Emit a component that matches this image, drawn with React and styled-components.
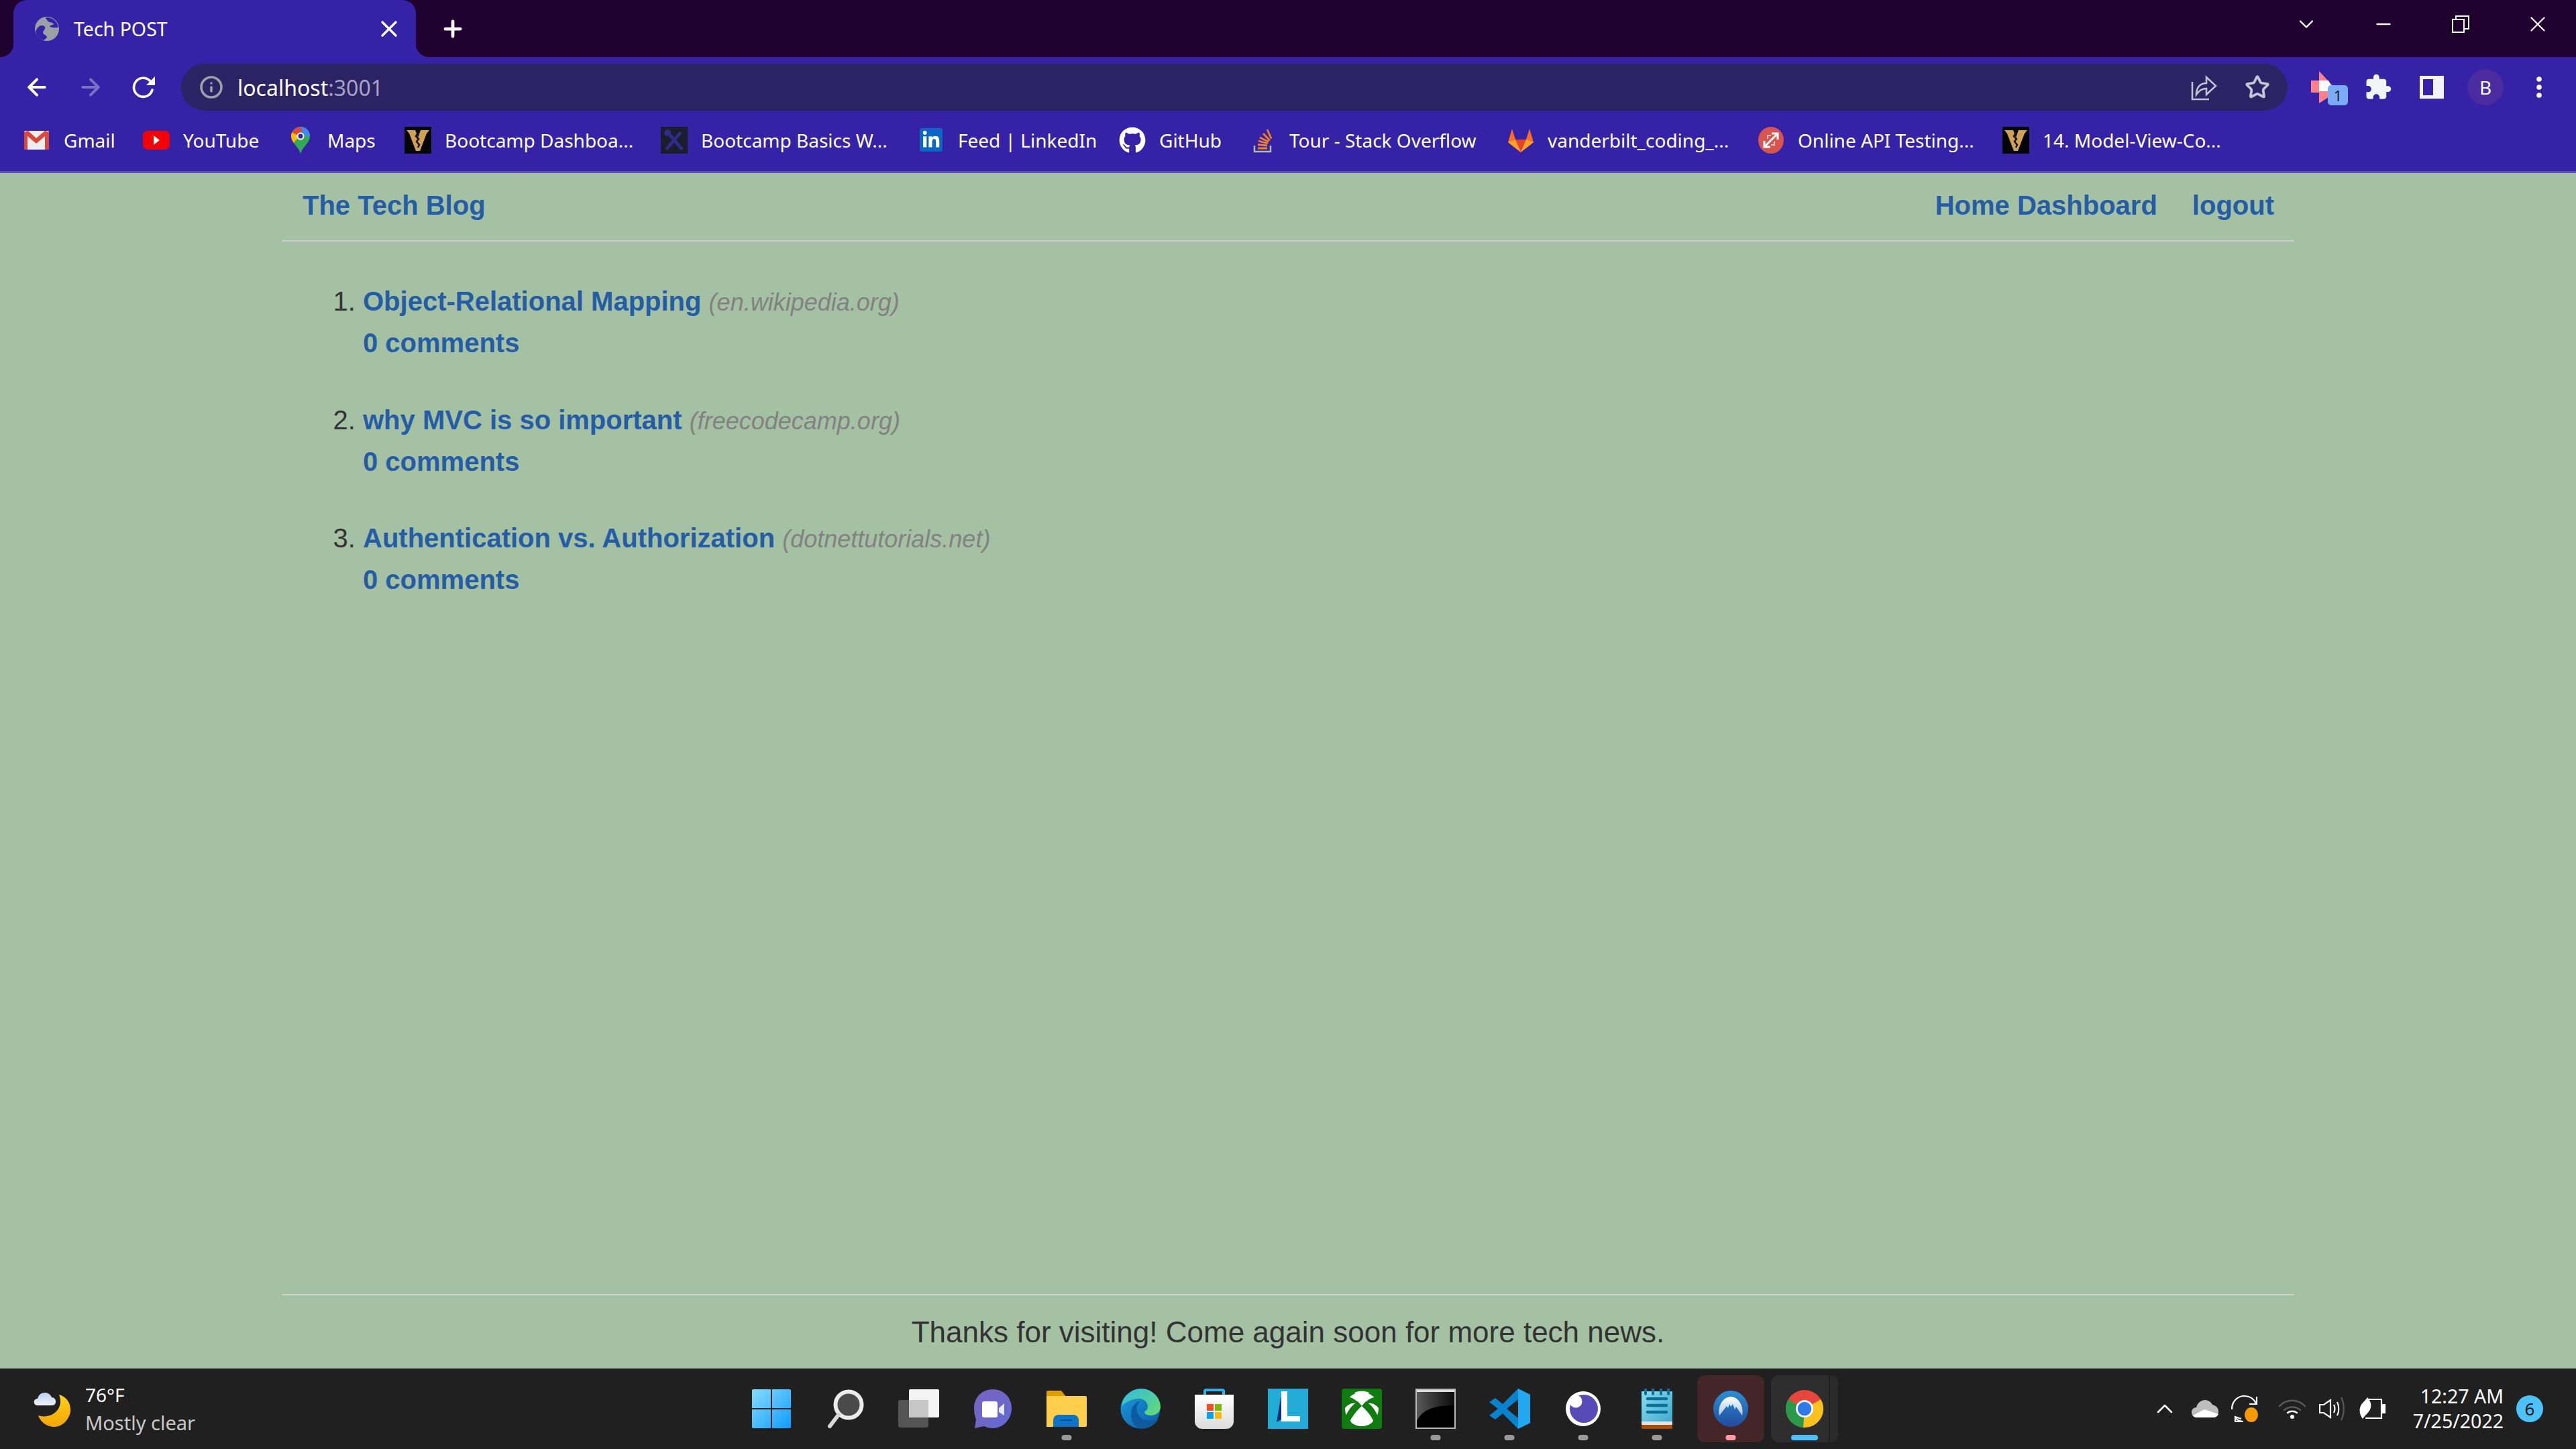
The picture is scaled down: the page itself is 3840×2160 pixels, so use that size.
import styled, { createGlobalStyle } from "styled-components";
import { ArrowLeft, ArrowRight, Info, Star, X, Plus, ChevronDown, ChevronUp, Minus } from "lucide-react";
import { MdExtension } from "react-icons/md";
import { FaGithub, FaLinkedinIn } from "react-icons/fa";

const UI_FONT = `"Noto Sans", "Open Sans", sans-serif`;
const PAGE_FONT = `"Liberation Sans", Arial, sans-serif`;

const GlobalStyle = createGlobalStyle`
  html, body {
    margin: 0;
    padding: 0;
    background: #a5c1a3;
  }
  * {
    box-sizing: border-box;
  }
`;

const Screen = styled.div`
  width: 3840px;
  height: 2160px;
  display: flex;
  flex-direction: column;
  overflow: hidden;
  font-family: ${UI_FONT};
`;

// ---------------- BROWSER TABS ----------------
const TabStrip = styled.div`
  height: 85px;
  flex: none;
  display: flex;
  padding-left: 20px;
  background: #1f002f;
`;

const Tab = styled.div`
  position: relative;
  width: 600px;
  height: 85px;
  display: flex;
  align-items: center;
  padding: 0 20px 0 32px;
  background: #3522a6;
  border-radius: 20px 20px 0 0;
  color: #fff;

  &::before,
  &::after {
    content: "";
    position: absolute;
    bottom: 0;
    width: 20px;
    height: 20px;
  }
  &::before {
    left: -20px;
    background: radial-gradient(circle at 0 0, transparent 20px, #3522a6 20.5px);
  }
  &::after {
    right: -20px;
    background: radial-gradient(circle at 100% 0, transparent 20px, #3522a6 20.5px);
  }
`;

const TabTitle = styled.span`
  flex: 1;
  margin-left: 22px;
  font-size: 28.5px;
  white-space: nowrap;
`;

const NewTab = styled.div`
  width: 70px;
  margin-left: 20px;
  display: flex;
  align-items: center;
  justify-content: center;
  color: #fff;
`;

const WindowControls = styled.div`
  margin-left: auto;
  display: flex;
`;

const WindowButton = styled.div`
  width: 115px;
  height: 72px;
  display: flex;
  align-items: center;
  justify-content: center;
  color: #fff;
`;

// ---------------- TOOLBAR ----------------
const Toolbar = styled.div`
  height: 80px;
  flex: none;
  display: flex;
  align-items: center;
  padding: 10px 15px 0;
  background: #3522a6;
`;

const ToolButton = styled.div`
  width: 80px;
  height: 70px;
  flex: none;
  display: flex;
  align-items: center;
  justify-content: center;
  color: ${(p) => p.$color || "#fff"};
`;

const AddressBar = styled.div`
  width: 3140px;
  height: 70px;
  flex: none;
  margin: 0 15px;
  padding: 0 5px 0 27px;
  display: flex;
  align-items: center;
  background: #2c2365;
  border-radius: 35px;
`;

const Url = styled.div`
  margin-left: 21px;
  font-size: 32px;
  color: #fff;
`;

const UrlPort = styled.span`
  color: #a8a3c4;
`;

const BarActions = styled.div`
  margin-left: auto;
  display: flex;
`;

const ProfileBadge = styled.div`
  width: 54px;
  height: 54px;
  display: flex;
  align-items: center;
  justify-content: center;
  border-radius: 50%;
  background: #4a2ba0;
  color: #fff;
  font-size: 28px;
`;

const ExtensionWrap = styled.div`
  position: relative;
  width: 40px;
  height: 48px;
`;

const ExtensionCount = styled.span`
  position: absolute;
  left: 25px;
  top: 21px;
  width: 30px;
  height: 30px;
  display: flex;
  align-items: center;
  justify-content: center;
  border-radius: 5px;
  background: #7baaf7;
  color: #202124;
  font-size: 22px;
`;

// ---------------- BOOKMARKS ----------------
const BookmarksBar = styled.div`
  height: 93px;
  flex: none;
  display: flex;
  align-items: center;
  padding: 0 0 3px 35px;
  background: #3522a6;
  border-bottom: 3px solid #6050b8;
`;

const Bookmark = styled.div`
  width: ${(p) => p.$w}px;
  flex: none;
  display: flex;
  align-items: center;
  gap: 20px;
  font-size: 28px;
  color: #fff;
  white-space: nowrap;
`;

const BookmarkIcon = styled.svg`
  width: 40px;
  height: 40px;
  flex: none;
`;

const LinkedinSlot = styled.div`
  width: 40px;
  height: 40px;
  flex: none;
  display: flex;
  align-items: center;
  justify-content: center;
`;

const LinkedinBox = styled.div`
  width: 34px;
  height: 35px;
  display: flex;
  align-items: center;
  justify-content: center;
  border-radius: 3px;
  background: #0a66c2;
`;

// ---------------- PAGE ----------------
const Main = styled.main`
  flex: 1;
  display: flex;
  flex-direction: column;
  width: 3000px;
  margin: 0 auto;
  font-family: ${PAGE_FONT};
  color: #333;
`;

const SiteHeader = styled.header`
  height: 102px;
  flex: none;
  display: flex;
  align-items: center;
  justify-content: space-between;
  padding: 0 30px 4px 31px;
  border-bottom: 2px solid #d0d0d0;
`;

const SiteLink = styled.a`
  font-size: 40px;
  font-weight: 700;
  line-height: 62px;
  color: #245ca6;
  text-decoration: none;
`;

const SiteNav = styled.nav`
  display: flex;
  gap: 52px;
`;

const PostList = styled.ol`
  flex: 1;
  margin: 58px 0 0;
  padding: 0 0 0 121px;
  list-style: decimal;
`;

const Post = styled.li`
  margin-bottom: 52.5px;
  font-size: 40px;
  line-height: 62px;
`;

const PostLine = styled.div`
  height: 62px;
  white-space: nowrap;
`;

const Domain = styled.span`
  font-size: 36px;
  font-style: italic;
  color: #828282;
`;

const SiteFooter = styled.footer`
  height: 111px;
  flex: none;
  padding-top: 29px;
  border-top: 2px solid #d0d0d0;
  text-align: center;
  font-size: 44px;
  line-height: 52px;
`;

// ---------------- TASKBAR ----------------
const Taskbar = styled.div`
  height: 120px;
  flex: none;
  display: flex;
  align-items: center;
  background: #202020;
  color: #fff;
`;

const Weather = styled.div`
  width: 1095px;
  flex: none;
  display: flex;
  align-items: center;
  gap: 21px;
  padding-left: 50px;
`;

const WeatherText = styled.div`
  font-size: 28px;
  line-height: 41px;
`;

const WeatherSub = styled.div`
  font-size: 29px;
  color: #c8c8c8;
`;

const Apps = styled.div`
  display: flex;
`;

const AppCell = styled.div`
  position: relative;
  width: 110px;
  height: 120px;
  flex: none;
  display: flex;
  align-items: center;
  justify-content: center;
`;

const AppTile = styled.div`
  position: relative;
  width: 100px;
  height: 100px;
  display: flex;
  align-items: center;
  justify-content: center;
  border-radius: 12px;
  background: ${(p) =>
    p.$state === "alert" ? "#452628" : p.$state === "active" ? "#2e2e2e" : "transparent"};

  &::after {
    content: "";
    display: ${(p) => (p.$state === "active" ? "block" : "none")};
    position: absolute;
    top: 0;
    right: 0;
    bottom: 0;
    width: 12px;
    border-left: 2px solid #202020;
    border-radius: 0 12px 12px 0;
    background: #2a2a2a;
  }
`;

const AppDot = styled.span`
  position: absolute;
  left: 50%;
  bottom: 13px;
  width: ${(p) => (p.$state === "active" ? 40 : 15)}px;
  height: 8px;
  transform: translateX(-50%);
  border-radius: 4px;
  background: ${(p) =>
    p.$state === "active" ? "#4cc2ff" : p.$state === "alert" ? "#ff99a4" : "#9a9a9a"};
`;

const Tray = styled.div`
  margin-left: auto;
  display: flex;
  align-items: center;
  padding-right: 49px;
`;

const TrayIcon = styled.div`
  width: 60px;
  height: 60px;
  margin-left: ${(p) => (p.$spaced ? 10 : 0)}px;
  display: flex;
  align-items: center;
  justify-content: center;
  color: #fff;
`;

const Clock = styled.div`
  width: 165px;
  text-align: right;
  font-size: 28.5px;
  line-height: 37px;
  white-space: nowrap;
`;

const NotificationBadge = styled.div`
  width: 40px;
  height: 40px;
  margin-left: 19px;
  display: flex;
  align-items: center;
  justify-content: center;
  border-radius: 50%;
  background: #4cc2ff;
  color: #111;
  font-size: 26px;
`;

// ---------------- ICONS ----------------
const Globe = () => (
  <svg width="36" height="36" viewBox="0 0 36 36">
    <circle cx="18" cy="18" r="18" fill="#9aa0a6" />
    <path d="M1 22c2-5 5-9 9-9 4 0 6 2 5 5-1 2-3 3-3 6 1 3 5 3 6 6-1 2-3 4-5 5C7 34 2 29 1 22z" fill="#3522a6" />
    <path d="M16 1c1 3 3 6 6 7 3 1 6 1 6 3-1 2-5 1-6 3 2 3 8 2 13 2C34 7 26 0 16 1z" fill="#3522a6" />
  </svg>
);

const Reload = () => (
  <svg width="36" height="36" viewBox="0 0 36 36">
    <path d="M30 22a14 14 0 1 1-3-13" fill="none" stroke="#fff" strokeWidth="3.6" strokeLinecap="round" />
    <path d="M34 2v13H21z" fill="#fff" />
  </svg>
);

const Share = () => (
  <svg width="40" height="40" viewBox="0 0 40 40" fill="none" stroke="#c4c4d2" strokeWidth="2.6">
    <path d="M3 12v26h25" />
    <path d="M9 31c0-11 6-17 15-17V5l14 13-14 13v-9c-7 0-11 3-15 9z" />
  </svg>
);

const ExtensionArrow = () => (
  <svg width="40" height="48" viewBox="0 0 40 48">
    <path d="M12 0l28 30-28 18V32H0V14h12z" fill="#ff8088" />
    <path d="M12 14h14l8 16H12z" fill="#fff" />
  </svg>
);

const SidePanel = () => (
  <svg width="36" height="36" viewBox="0 0 36 36">
    <path fillRule="evenodd" d="M0 1h36v34H0zM5 6v24h15V6z" fill="#f4f4f8" />
  </svg>
);

const Kebab = () => (
  <svg width="10" height="32" viewBox="0 0 10 32" fill="#fff">
    <circle cx="5" cy="4" r="3.8" />
    <circle cx="5" cy="16" r="3.8" />
    <circle cx="5" cy="28" r="3.8" />
  </svg>
);

const RestoreIcon = () => (
  <svg width="26" height="26" viewBox="0 0 26 26" fill="none" stroke="#fff" strokeWidth="2">
    <rect x="1" y="6" width="17" height="19" />
    <path d="M6 6V1h19v19h-7" />
  </svg>
);

const VIcon = () => (
  <BookmarkIcon viewBox="0 0 40 40">
    <rect width="40" height="40" fill="#050505" />
    <path d="M3 5h13l4 11 4-11h13l-4 5-10 26h-6L7 10z" fill="#d0a154" />
    <path d="M20 9l-3 5 4 4-3 4 4 5-2 4" fill="none" stroke="#111" strokeWidth="2.5" />
  </BookmarkIcon>
);

const bookmarkIcons = {
  gmail: (
    <BookmarkIcon viewBox="0 0 40 40">
      <rect x="1" y="6" width="37" height="28" rx="2" fill="#eeeeee" />
      <path d="M1 8v26h5V14l13 11 13-11v20h6V8l-6-2-13 11L7 6z" fill="#d9483b" />
    </BookmarkIcon>
  ),
  youtube: (
    <BookmarkIcon viewBox="0 0 40 40">
      <rect y="6" width="40" height="28" rx="7" fill="#f60002" />
      <path d="M16 13l9 7-9 7z" fill="#fff" />
    </BookmarkIcon>
  ),
  maps: (
    <BookmarkIcon viewBox="0 0 40 40">
      <path d="M20 0c8 0 14 6 14 14 0 10-10 14-14 26C16 28 6 24 6 14 6 6 12 0 20 0z" fill="#34a853" />
      <path d="M8 8C6 10 6 12 6 14c0 4 2 7 4 10l8-10z" fill="#fbbc04" />
      <path d="M8 8c3-5 7-8 12-8l2 6-6 6-6-2z" fill="#ea4335" />
      <path d="M20 0c8 0 14 6 14 14l-8-1-4-7z" fill="#4285f4" />
      <circle cx="20" cy="14" r="5.5" fill="#fff" />
      <circle cx="20" cy="14" r="3.5" fill="#3522a6" />
    </BookmarkIcon>
  ),
  v: <VIcon />,
  tools: (
    <BookmarkIcon viewBox="0 0 40 40">
      <rect width="40" height="40" fill="#1a1d2b" />
      <path d="M10 8l22 26M30 8L8 34" stroke="#2f2a8c" strokeWidth="5" />
      <circle cx="10" cy="9" r="5" fill="#2f2a8c" />
    </BookmarkIcon>
  ),
  linkedin: (
    <LinkedinSlot>
      <LinkedinBox>
        <FaLinkedinIn size={28} color="#fff" />
      </LinkedinBox>
    </LinkedinSlot>
  ),
  github: <FaGithub size={40} color="#fff" style={{ flex: "none" }} />,
  stack: (
    <BookmarkIcon viewBox="0 0 40 40">
      <path d="M8 28v9h24V28" fill="none" stroke="#b5b5b5" strokeWidth="2.5" />
      <path d="M13 32h14M13 26.500l14 1.500M14 21l14 4M16 16l13 6.500M21 10l10 10.500M27 4l6 13.500" stroke="#f48024" strokeWidth="2.8" />
    </BookmarkIcon>
  ),
  gitlab: (
    <BookmarkIcon viewBox="0 0 40 40">
      <path d="M20 38L1 23 7 3l5 16h16l5-16 6 20z" fill="#fc6d26" />
      <path d="M20 38l-8-19h16z" fill="#e24329" />
      <path d="M20 38L1 23l11-4zM20 38l19-15-11-4z" fill="#fca326" />
    </BookmarkIcon>
  ),
  api: (
    <BookmarkIcon viewBox="0 0 40 40">
      <ellipse cx="20" cy="20" rx="19" ry="20" fill="#d9534f" />
      <path d="M10 30L29 11" stroke="#fff" strokeWidth="3" />
      <path d="M21 10h9v9M19 30h-9v-9" fill="none" stroke="#fff" strokeWidth="3" />
      <path d="M15 18v-5h5M25 22v5h-5" fill="none" stroke="#f4c4c2" strokeWidth="2" />
    </BookmarkIcon>
  ),
};

const WeatherIcon = () => (
  <svg width="56" height="56" viewBox="0 0 56 56">
    <defs>
      <linearGradient id="moon" x1="0" y1="0" x2="0" y2="1">
        <stop offset="0" stopColor="#ffd21f" />
        <stop offset="1" stopColor="#f4a400" />
      </linearGradient>
      <linearGradient id="cloud" x1="0" y1="0" x2="0" y2="1">
        <stop offset="0" stopColor="#b9d0f0" />
        <stop offset="1" stopColor="#f0f2f6" />
      </linearGradient>
    </defs>
    <path d="M38 7c12 3 18 14 17 25-2 13-13 24-26 23C18 54 10 47 7 38c5 2 13 2 20-1 12-6 16-18 11-30z" fill="url(#moon)" />
    <path d="M6 23c-7 0-7-10 0-10 1-4 4-9 11-9 6 0 9 4 10 7 8 0 8 12 1 12z" fill="url(#cloud)" />
  </svg>
);

const appIcons = [
  <svg key="win" width="58" height="58" viewBox="0 0 58 58">
    <defs>
      <linearGradient id="win" x1="0" y1="0" x2="1" y2="1">
        <stop offset="0" stopColor="#86dcfb" />
        <stop offset="1" stopColor="#0f9bff" />
      </linearGradient>
    </defs>
    <path d="M0 2a2 2 0 0 1 2-2h26v28H0zM30 0h26a2 2 0 0 1 2 2v26H30zM0 30h28v28H2a2 2 0 0 1-2-2zM30 30h28v26a2 2 0 0 1-2 2H30z" fill="url(#win)" />
  </svg>,
  <svg key="search" width="56" height="58" viewBox="0 0 56 58">
    <circle cx="33" cy="23" r="19.5" fill="#4a4a4a" stroke="#ececec" strokeWidth="6" />
    <path d="M18 38L5 55" stroke="#d8d8d8" strokeWidth="6" strokeLinecap="round" />
  </svg>,
  <svg key="view" width="62" height="58" viewBox="0 0 62 58">
    <rect x="16" y="0" width="45" height="42" rx="2" fill="#f4f4f4" />
    <rect x="0" y="16" width="45" height="41" rx="3" fill="#5a5a5a" fillOpacity="0.9" />
    <rect x="16" y="16" width="29" height="26" fill="#c6c6c6" />
  </svg>,
  <svg key="teams" width="56" height="58" viewBox="0 0 56 58">
    <defs>
      <linearGradient id="teams" x1="0" y1="0" x2="1" y2="1">
        <stop offset="0" stopColor="#7b62bd" />
        <stop offset="1" stopColor="#5e6bd6" />
      </linearGradient>
    </defs>
    <path d="M28 0c16 0 28 12 28 28S44 58 28 58c-5 0-9-1-13-3L1 58l2-13C1 40 0 34 0 28 0 12 12 0 28 0z" fill="url(#teams)" />
    <rect x="12" y="18" width="23" height="24" rx="3" fill="#fff" />
    <path d="M37 28l8-7v18l-8-5z" fill="#e8e8f6" />
  </svg>,
  <svg key="folder" width="60" height="54" viewBox="0 0 60 54">
    <path d="M0 2a2 2 0 0 1 2-2h20l7 9H0z" fill="#e0a100" />
    <path d="M0 8h58a2 2 0 0 1 2 2v42a2 2 0 0 1-2 2H0z" fill="#fdcf4c" />
    <path d="M10 54V44a8 8 0 0 1 8-8h22a8 8 0 0 1 8 8v10z" fill="#0f72c4" />
    <path d="M20 44h18" stroke="#0a4f8c" strokeWidth="2" />
  </svg>,
  <svg key="edge" width="60" height="60" viewBox="0 0 60 60">
    <defs>
      <linearGradient id="edgeBlue" x1="0" y1="0" x2="1" y2="1">
        <stop offset="0" stopColor="#1b9de2" />
        <stop offset="1" stopColor="#0c59a4" />
      </linearGradient>
      <linearGradient id="edgeTop" x1="0" y1="0" x2="1" y2="1">
        <stop offset="0" stopColor="#33bbe5" />
        <stop offset="1" stopColor="#66db6c" />
      </linearGradient>
    </defs>
    <circle cx="30" cy="30" r="29.5" fill="url(#edgeBlue)" />
    <path d="M2 27C4 10 18 0 31 0c16 0 29 13 29 27 0 8-7 13-14 13-5 0-10-2-10-5 1-2 5-3 5-8 0-7-6-12-13-12C15 15 5 22 2 27z" fill="url(#edgeTop)" />
    <path d="M16 38c0-10 5-17 14-20-5 5-7 12-4 19 4 10 18 14 31 8-5 9-15 15-27 15-9-3-14-12-14-22z" fill="#0d5a9e" />
  </svg>,
  <svg key="store" width="58" height="60" viewBox="0 0 58 60">
    <defs>
      <linearGradient id="bag" x1="0" y1="0" x2="0" y2="1">
        <stop offset="0" stopColor="#ffffff" />
        <stop offset="1" stopColor="#dcdcdc" />
      </linearGradient>
    </defs>
    <path d="M15 12V4a2 2 0 0 1 2-2h24a2 2 0 0 1 2 2v8" fill="none" stroke="#2db2ec" strokeWidth="4" />
    <path d="M0 9h58v40c0 6-5 11-11 11H11C5 60 0 55 0 49z" fill="url(#bag)" />
    <rect x="18" y="23" width="10" height="10" fill="#f25022" />
    <rect x="30" y="23" width="10" height="10" fill="#7fba00" />
    <rect x="18" y="35" width="10" height="10" fill="#00a4ef" />
    <rect x="30" y="35" width="10" height="10" fill="#ffb900" />
  </svg>,
  <svg key="l" width="60" height="60" viewBox="0 0 60 60">
    <rect width="60" height="60" fill="#23abd8" />
    <path d="M13 50L20 9v37z" fill="#14307a" />
    <path d="M20 9h9v37h19v8H20z" fill="#fff" transform="translate(0 -5)" />
  </svg>,
  <svg key="xbox" width="60" height="60" viewBox="0 0 60 60">
    <rect width="60" height="60" rx="4" fill="#107c10" />
    <circle cx="30" cy="30" r="25" fill="#fff" />
    <path d="M7 12c8 0 16 6 23 14 7-8 15-14 23-14l3 18c-4-5-14-14-26-4C18 16 8 25 4 30z" fill="#107c10" />
    <path d="M30 26c-9 8-16 18-18 24l-6-8C9 32 17 23 24 19zM30 26c9 8 16 18 18 24l6-8c-3-10-11-19-18-23z" fill="#107c10" />
    <path d="M30 27C21 35 14 44 14 50c4 4 10 6 16 6s12-2 16-6c0-6-7-15-16-23z" fill="#fff" />
    <path d="M19 6c7-3 15-3 22 0l-11 6z" fill="#fff" />
  </svg>,
  <svg key="term" width="60" height="60" viewBox="0 0 60 60">
    <defs>
      <linearGradient id="term" x1="0" y1="0" x2="1" y2="0">
        <stop offset="0" stopColor="#5a5a5a" />
        <stop offset="1" stopColor="#0a0a0a" />
      </linearGradient>
    </defs>
    <rect x="1" y="1" width="58" height="58" fill="#000" stroke="#bbb" strokeWidth="2" />
    <rect x="2" y="2" width="56" height="3" fill="#ddd" />
    <path d="M2 5h56v20C35 25 12 28 2 48z" fill="url(#term)" />
  </svg>,
  <svg key="code" width="62" height="60" viewBox="0 0 62 60">
    <path d="M44 0l18 9v42l-18 9-23-23-11 9-9-6 13-10L1 20l9-6 11 9z" fill="#0a83cf" />
    <path d="M44 0l18 9v42l-18 9z" fill="#23a7f0" />
    <path d="M44 16L27 30l17 14z" fill="#202020" />
  </svg>,
  <svg key="eye" width="52" height="52" viewBox="0 0 52 52">
    <circle cx="26" cy="26" r="26" fill="#fff" />
    <circle cx="27" cy="26" r="21" fill="#584bb8" />
    <circle cx="15" cy="15" r="9.5" fill="#fff" />
  </svg>,
  <svg key="notes" width="46" height="60" viewBox="0 0 46 60">
    <defs>
      <linearGradient id="notes" x1="0" y1="0" x2="1" y2="1">
        <stop offset="0" stopColor="#8adcf2" />
        <stop offset="1" stopColor="#3aa8cc" />
      </linearGradient>
    </defs>
    <rect y="4" width="46" height="50" fill="url(#notes)" />
    <rect y="49" width="46" height="5" fill="#e2e2e2" />
    <rect y="54" width="46" height="6" rx="2" fill="#a6500c" />
    <path d="M6 0v8M17 0v8M29 0v8M40 0v8" stroke="#0e6f96" strokeWidth="4" strokeLinecap="round" />
    <path d="M9 15h28M9 25h28M9 35h28" stroke="#0e6f96" strokeWidth="4.5" strokeLinecap="round" />
  </svg>,
  <svg key="nord" width="52" height="54" viewBox="0 0 52 54">
    <defs>
      <linearGradient id="nord" x1="0" y1="0" x2="0" y2="1">
        <stop offset="0" stopColor="#2a8fd8" />
        <stop offset="1" stopColor="#234a9a" />
      </linearGradient>
      <linearGradient id="peak" x1="0" y1="0" x2="0" y2="1">
        <stop offset="0" stopColor="#ffffff" />
        <stop offset="1" stopColor="#aac6e6" />
      </linearGradient>
    </defs>
    <ellipse cx="26" cy="27" rx="26" ry="27" fill="url(#nord)" />
    <path d="M9 37C6 24 14 9 26 9c12 0 20 15 17 28l-9-13-2 4-3-8-3 4-2-4-2 6-2-3z" fill="url(#peak)" />
  </svg>,
  <svg key="chrome" width="56" height="58" viewBox="0 0 60 60">
    <circle cx="30" cy="30" r="30" fill="#e8453c" />
    <path d="M30 30L4 15A30 30 0 0 0 28 60z" fill="#2a9a48" />
    <path d="M30 30L56 15A30 30 0 0 1 28 60z" fill="#fcc11b" />
    <circle cx="30" cy="30" r="14" fill="#fff" />
    <circle cx="30" cy="30" r="11" fill="#2f79ea" />
  </svg>,
];

const appStates = [null, null, null, null, "open", null, null, null, null, "open", "open", "open", "open", "alert", "active"];

const bookmarks = [
  { icon: "gmail", label: "Gmail", w: 178 },
  { icon: "youtube", label: "YouTube", w: 215 },
  { icon: "maps", label: "Maps", w: 175 },
  { icon: "v", label: "Bootcamp Dashboa...", w: 382 },
  { icon: "tools", label: "Bootcamp Basics W...", w: 383 },
  { icon: "linkedin", label: "Feed | LinkedIn", w: 300 },
  { icon: "github", label: "GitHub", w: 194 },
  { icon: "stack", label: "Tour - Stack Overflow", w: 385 },
  { icon: "gitlab", label: "vanderbilt_coding_...", w: 373 },
  { icon: "api", label: "Online API Testing...", w: 365 },
  { icon: "v", label: "14. Model-View-Co...", w: 400 },
];

const posts = [
  { title: "Object-Relational Mapping", domain: "en.wikipedia.org" },
  { title: "why MVC is so important", domain: "freecodecamp.org" },
  { title: "Authentication vs. Authorization", domain: "dotnettutorials.net" },
];

function App() {
  return (
    <Screen>
      <GlobalStyle />

      <TabStrip>
        <Tab>
          <Globe />
          <TabTitle>Tech POST</TabTitle>
          <X size={40} strokeWidth={2} />
        </Tab>
        <NewTab>
          <Plus size={38} strokeWidth={3} />
        </NewTab>
        <WindowControls>
          <WindowButton>
            <ChevronDown size={36} strokeWidth={1.6} />
          </WindowButton>
          <WindowButton>
            <Minus size={32} strokeWidth={2} />
          </WindowButton>
          <WindowButton>
            <RestoreIcon />
          </WindowButton>
          <WindowButton>
            <X size={38} strokeWidth={1.4} />
          </WindowButton>
        </WindowControls>
      </TabStrip>

      <Toolbar>
        <ToolButton>
          <ArrowLeft size={40} strokeWidth={2.4} />
        </ToolButton>
        <ToolButton $color="#7b6fc8">
          <ArrowRight size={40} strokeWidth={2.4} />
        </ToolButton>
        <ToolButton>
          <Reload />
        </ToolButton>
        <AddressBar>
          <Info size={36} color="#9aa0a6" strokeWidth={2.4} />
          <Url>
            localhost<UrlPort>:3001</UrlPort>
          </Url>
          <BarActions>
            <ToolButton>
              <Share />
            </ToolButton>
            <ToolButton $color="#c4c4d2">
              <Star size={38} strokeWidth={2.4} />
            </ToolButton>
          </BarActions>
        </AddressBar>
        <ToolButton>
          <ExtensionWrap>
            <ExtensionArrow />
            <ExtensionCount>1</ExtensionCount>
          </ExtensionWrap>
        </ToolButton>
        <ToolButton $color="#f1f3f4">
          <MdExtension size={42} />
        </ToolButton>
        <ToolButton>
          <SidePanel />
        </ToolButton>
        <ToolButton>
          <ProfileBadge>B</ProfileBadge>
        </ToolButton>
        <ToolButton>
          <Kebab />
        </ToolButton>
      </Toolbar>

      <BookmarksBar>
        {bookmarks.map((b) => (
          <Bookmark key={b.label} $w={b.w}>
            {bookmarkIcons[b.icon]}
            <span>{b.label}</span>
          </Bookmark>
        ))}
      </BookmarksBar>

      <Main>
        <SiteHeader>
          <SiteLink href="#">The Tech Blog</SiteLink>
          <SiteNav>
            <SiteLink href="#">Home Dashboard</SiteLink>
            <SiteLink href="#">logout</SiteLink>
          </SiteNav>
        </SiteHeader>

        <PostList>
          {posts.map((post) => (
            <Post key={post.title}>
              <PostLine>
                <SiteLink href="#">{post.title}</SiteLink> <Domain>({post.domain})</Domain>
              </PostLine>
              <PostLine>
                <SiteLink href="#">0 comments</SiteLink>
              </PostLine>
            </Post>
          ))}
        </PostList>

        <SiteFooter>Thanks for visiting! Come again soon for more tech news.</SiteFooter>
      </Main>

      <Taskbar>
        <Weather>
          <WeatherIcon />
          <WeatherText>
            <div>76°F</div>
            <WeatherSub>Mostly clear</WeatherSub>
          </WeatherText>
        </Weather>

        <Apps>
          {appIcons.map((icon, i) => (
            <AppCell key={i}>
              <AppTile $state={appStates[i]}>{icon}</AppTile>
              {appStates[i] && <AppDot $state={appStates[i]} />}
            </AppCell>
          ))}
        </Apps>

        <Tray>
          <TrayIcon>
            <ChevronUp size={40} strokeWidth={1.5} />
          </TrayIcon>
          <TrayIcon>
            <svg width="40" height="26" viewBox="0 0 40 26">
              <path d="M8 26C2 26 0 22 0 18c0-4 3-7 7-7 2-7 7-11 13-11 5 0 9 3 11 7 5 1 9 5 9 10 0 5-3 9-8 9z" fill="#bdbdbd" />
              <path d="M2 23l17-9 21 7c-1 3-4 5-8 5H8c-3 0-5-1-6-3z" fill="#fff" />
            </svg>
          </TrayIcon>
          <TrayIcon>
            <svg width="42" height="42" viewBox="0 0 42 42" fill="none" stroke="#fff" strokeWidth="2.2">
              <path d="M1 22C1 10 9 2 20 2c8 0 13 3 17 11M38 3v11H27M15 36l-9-3v7h10M6 34c3 4 7 6 12 6" />
              <ellipse cx="30" cy="30" rx="10" ry="11" fill="#f59b00" stroke="none" />
            </svg>
          </TrayIcon>
          <TrayIcon $spaced>
            <svg width="42" height="30" viewBox="0 0 42 30" fill="none" strokeLinecap="round">
              <path d="M2 11C12 0 30 0 40 11" stroke="#5a5a5a" strokeWidth="2.4" />
              <path d="M9 17c7-6 17-6 24 0" stroke="#5a5a5a" strokeWidth="2.4" />
              <path d="M14 21c4-3 10-3 14 0" stroke="#fff" strokeWidth="2.4" />
              <circle cx="21" cy="27" r="3" fill="#fff" />
            </svg>
          </TrayIcon>
          <TrayIcon>
            <svg width="40" height="40" viewBox="0 0 40 40" fill="none" stroke="#fff" strokeWidth="2.2">
              <path d="M1 14h6l10-7v26l-10-7H1z" />
              <path d="M22 14c2 4 2 8 0 12M27 10c3 6 3 14 0 20" />
              <path d="M33 3c5 10 5 24 0 34" stroke="#5a5a5a" />
            </svg>
          </TrayIcon>
          <TrayIcon>
            <svg width="40" height="36" viewBox="0 0 40 36" fill="none" stroke="#fff" strokeWidth="2.2">
              <path d="M14 4h19v28H9" />
              <path d="M33 12h5v12h-5" fill="#fff" />
              <path d="M12 1c5 5 7 12 4 18-2 5-7 8-11 14C1 28-1 20 2 14 4 9 9 6 12 1z" fill="#fff" stroke="none" />
            </svg>
          </TrayIcon>
          <Clock>
            <div>12:27 AM</div>
            <div>7/25/2022</div>
          </Clock>
          <NotificationBadge>6</NotificationBadge>
        </Tray>
      </Taskbar>
    </Screen>
  );
}

export default App;
